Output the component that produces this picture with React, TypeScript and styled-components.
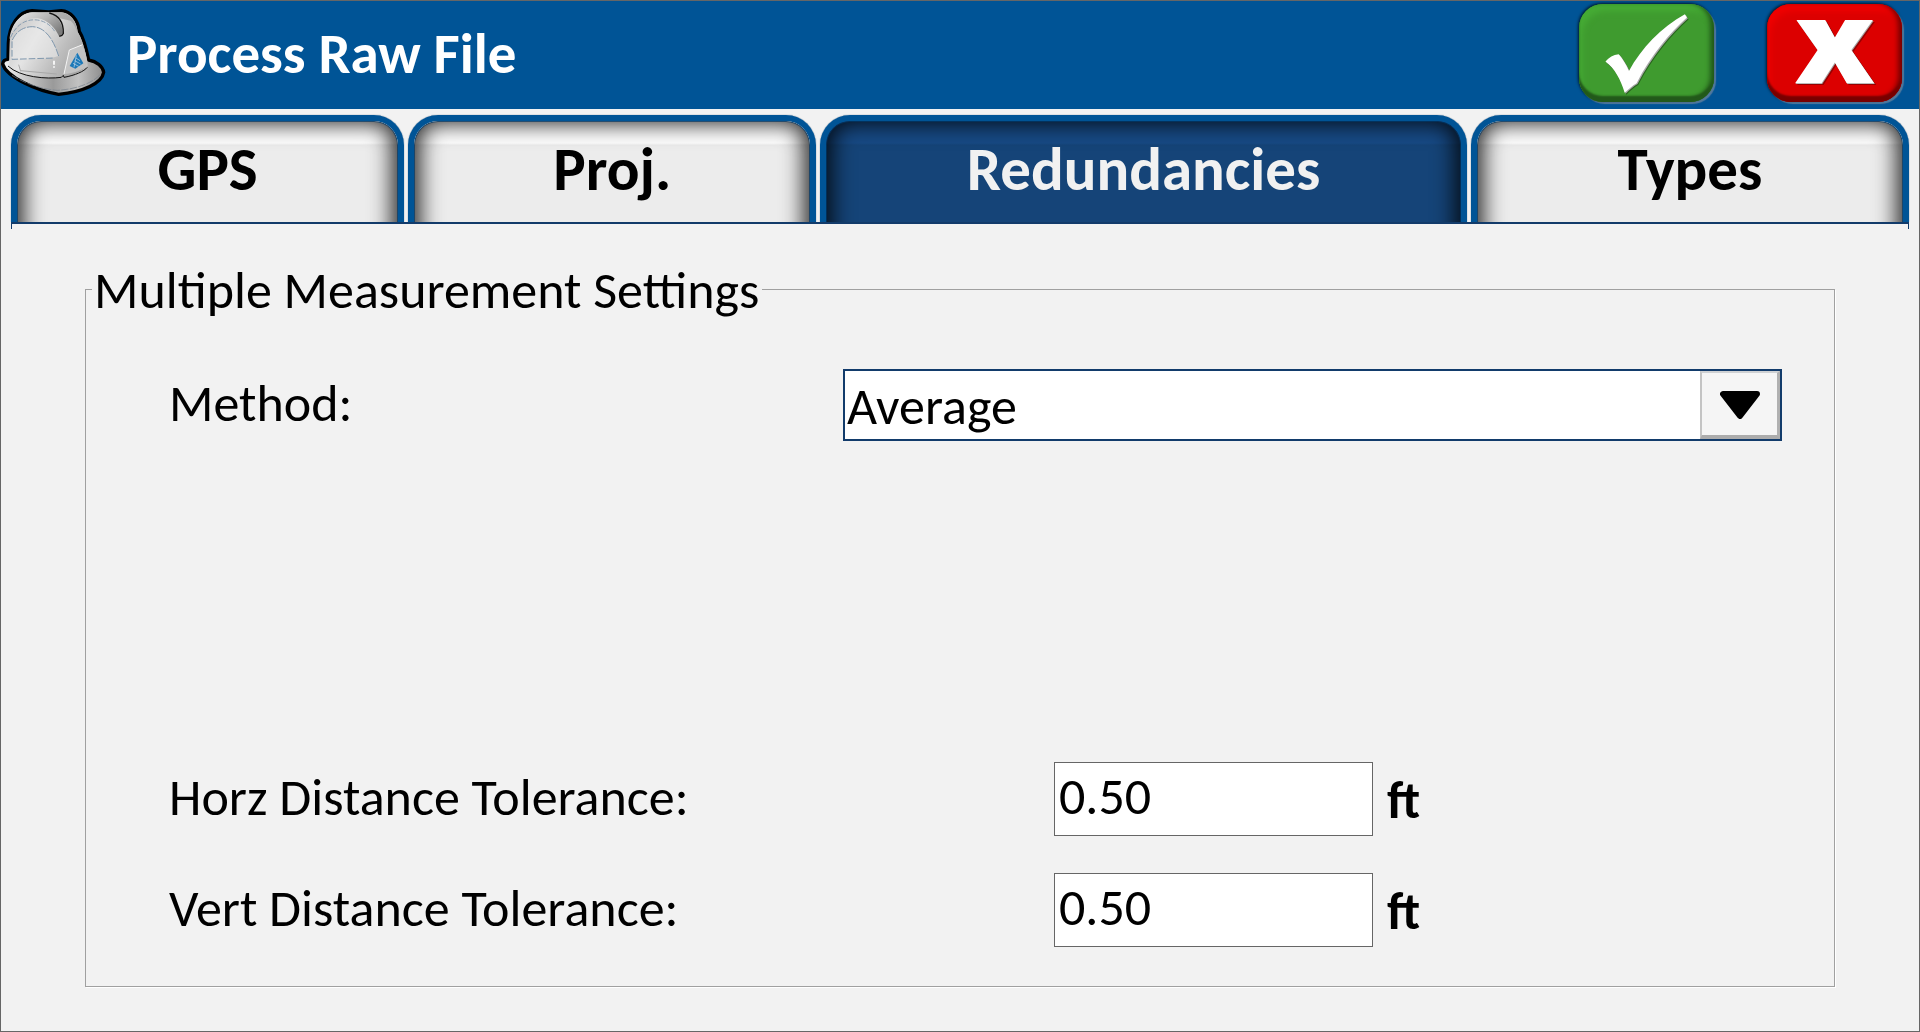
import React, { useState } from "react";
import styled, { createGlobalStyle } from "styled-components";

const color = {
  frame: "#666666",
  brand: "#005496",
  navy: "#123b6b",
  surface: "#f2f2f2",
  tab: "#ececec",
  tabActive: "#154478",
  etched: "#a0a0a0",
};

const GlobalStyle = createGlobalStyle`
  *, *::before, *::after { box-sizing: border-box; }
  body {
    margin: 0;
    background: ${color.surface};
    color: #000;
    font-family: Calibri, Carlito, "Open Sans", "Noto Sans", sans-serif;
  }
  button, input, select { font: inherit; color: inherit; }
`;

const Window = styled.div`
  display: flex;
  flex-direction: column;
  min-height: 100vh;
  border: 1px solid ${color.frame};
  background: ${color.surface};
`;

const TitleBar = styled.header`
  display: flex;
  align-items: flex-start;
  height: 108px;
  padding-right: 17px;
  background: ${color.brand};
  color: #fff;
`;

const Title = styled.h1`
  flex: 1;
  margin: 0;
  padding-left: 18px;
  font-size: 57px;
  line-height: 106px;
  font-weight: 700;
  white-space: nowrap;
`;

const Actions = styled.div`
  display: flex;
  gap: 53px;
  padding-top: 3px;
`;

const ActionButton = styled.button<{ $face: string; $light: string; $dark: string }>`
  width: 135px;
  height: 98px;
  padding: 0;
  border: 0;
  border-radius: 24px;
  background: ${(p) => p.$face};
  box-shadow:
    inset 0 -6px 2px ${(p) => p.$dark},
    inset -4px -2px 5px ${(p) => p.$dark},
    inset 3px 7px 6px ${(p) => p.$light},
    -1px -1px 3px rgba(0, 0, 0, 0.7),
    2px 2px 1px rgba(140, 150, 165, 0.6);
  cursor: pointer;
`;

const Glyph = styled.svg`
  display: block;
  width: 100%;
  height: 100%;
`;

const TabList = styled.div`
  display: flex;
  gap: 4px;
  margin: 6px 10px 0;
`;

const Tab = styled.button<{ $grow: number; $active: boolean }>`
  position: relative;
  flex: ${(p) => p.$grow} 1 0;
  min-width: 0;
  height: 107px;
  padding: 0;
  overflow: hidden;
  border: 6px solid ${color.brand};
  border-bottom: 0;
  border-radius: 30px 30px 0 0;
  background: ${(p) =>
    p.$active
      ? `linear-gradient(#174a85 22px, ${color.tabActive} 24px)`
      : `linear-gradient(#fff 22px, ${color.tab} 24px)`};
  box-shadow: 0 0 1px #24415c;
  color: ${(p) => (p.$active ? "#f1f1f1" : "#000")};
  font-size: 61px;
  line-height: 96px;
  font-weight: 700;
  cursor: pointer;

  &::before {
    content: "";
    position: absolute;
    inset: 0 0 -40px;
    border-radius: 24px;
    box-shadow:
      inset 0 0 0 1px rgba(0, 56, 104, 0.7),
      inset 0 -3px 22px 6px rgba(0, 0, 0, 0.85);
  }
`;

const TabText = styled.span`
  position: relative;
  display: block;
  height: 101px;
`;

const TabRule = styled.div`
  height: 7px;
  margin: 0 10px;
  border: solid ${color.navy};
  border-width: 2px 1px 0;
`;

const Panel = styled.main`
  display: flex;
  flex: 1;
  padding: 30px 84px 44px 84px;
`;

const Group = styled.fieldset`
  display: flex;
  flex: 1;
  flex-direction: column;
  min-width: 0;
  margin: 0;
  padding: 50px 52px 39px 83px;
  border: 1px solid ${color.etched};
  box-shadow: 1px 1px 0 #fff;
  font-size: 52px;
  line-height: 58px;
`;

const Legend = styled.legend`
  margin-left: -77px;
  padding: 2px 3px 0 2px;
`;

const FieldLabel = styled.label`
  padding-bottom: 4px;
`;

const MethodRow = styled.div`
  display: grid;
  grid-template-columns: minmax(0, 674fr) minmax(0, 939fr);
  align-items: center;
`;

const ToleranceList = styled.div`
  display: grid;
  gap: 37px;
  margin-top: auto;
`;

const ToleranceRow = styled.div`
  display: grid;
  grid-template-columns: minmax(0, 885fr) minmax(0, 319fr) minmax(0, 409fr);
  align-items: center;
`;

const SelectBox = styled.div`
  position: relative;
`;

const Select = styled.select`
  display: block;
  width: 100%;
  height: 72px;
  padding: 2px 84px 0 2px;
  appearance: none;
  border: 2px solid ${color.navy};
  border-radius: 0;
  outline: 0;
  background: #fff;
`;

const DropFace = styled.span`
  position: absolute;
  top: 2px;
  right: 2px;
  bottom: 2px;
  display: grid;
  place-items: center;
  width: 80px;
  padding-top: 2px;
  border: solid;
  border-width: 2px 3px 4px 2px;
  border-color: #cfd1d3 #b0b0b0 #acacac #c4c4c4;
  background: #f5f5f5;
  pointer-events: none;
`;

const NumberInput = styled.input`
  width: 100%;
  height: 74px;
  padding: 0 4px 6px;
  border: 1px solid ${color.frame};
  border-radius: 0;
  outline: 0;
  background: #fff;
`;

const Unit = styled.span`
  padding: 2px 0 0 14px;
  font-weight: 700;
`;

function HardHat() {
  return (
    <svg width="108" height="108" viewBox="3 3 324 324" aria-hidden="true">
      <defs>
        <linearGradient id="shell" x1="0" y1="0.2" x2="1" y2="0.7">
          <stop offset="0" stopColor="#c4c4c4" />
          <stop offset="0.35" stopColor="#e4e4e4" />
          <stop offset="0.7" stopColor="#bdbdbd" />
          <stop offset="1" stopColor="#a2a2a2" />
        </linearGradient>
        <linearGradient id="brim" x1="0" y1="0" x2="1" y2="0">
          <stop offset="0" stopColor="#f2f2f2" />
          <stop offset="0.5" stopColor="#9a9a9a" />
          <stop offset="0.75" stopColor="#c2c2c2" />
          <stop offset="1" stopColor="#8b8b8b" />
        </linearGradient>
        <linearGradient id="ridge" x1="0" y1="0" x2="1" y2="0.6">
          <stop offset="0" stopColor="#f4f4f4" />
          <stop offset="0.6" stopColor="#b5b5b5" />
          <stop offset="1" stopColor="#7c7c7c" />
        </linearGradient>
      </defs>
      <path
        d="M24 178 L25 130 C27 75 56 34 96 32 L146 36 L184 32 C212 34 234 58 238 94 C250 112 258 142 266 180 C290 184 309 200 311 217 C306 250 250 276 176 283 C110 272 20 232 8 192 C9 184 14 178 24 178 Z"
        fill="url(#brim)"
        stroke="#000"
        strokeWidth="10"
        strokeLinejoin="round"
      />
      <path
        d="M28 184 L29 130 C32 78 58 40 96 37 L184 37 C210 41 229 62 233 96 C247 120 255 146 261 184 C262 206 230 226 190 232 C130 236 60 230 28 198 Z"
        fill="url(#shell)"
      />
      <path d="M29 112 C36 70 62 39 98 38 L146 38 C172 46 188 70 189 98 L178 110 C166 84 144 60 112 54 C76 52 46 74 29 118 Z" fill="url(#ridge)" />
      <path d="M146 38 L184 37 C208 42 228 60 232 96 C230 88 222 70 212 62 L176 54 Z" fill="#8c8c8c" opacity="0.55" />
      <path d="M148 39 C176 46 191 68 190 100 C187 106 182 109 178 108" fill="none" stroke="#111" strokeWidth="4" />
      <path d="M36 178 L37 116 C50 92 72 80 98 80 C136 82 160 118 176 168 C150 178 90 178 36 178 Z" fill="#e9e9e9" opacity="0.6" />
      <path d="M37 120 C50 92 72 80 98 80 C136 82 160 118 176 168" fill="none" stroke="#7f97ad" strokeWidth="3" strokeDasharray="26 4" />
      <path d="M32 112 C48 74 78 56 112 60 C138 64 154 78 164 94" fill="none" stroke="#8b9fb2" strokeWidth="3" strokeDasharray="14 5" />
      <path d="M36 124 L36 178 L164 174" fill="none" stroke="#7f97ad" strokeWidth="3" strokeDasharray="20 6" />
      <path d="M24 198 C60 232 140 238 184 232 L190 226 L192 232 C226 226 252 214 262 202" fill="none" stroke="#111" strokeWidth="3" />
      <path d="M62 212 L170 222 M56 194 L62 214" fill="none" stroke="#a8a8a8" strokeWidth="3" />
      <path d="M36 226 C80 254 130 268 172 271 C230 268 280 248 302 222" fill="none" stroke="#76818d" strokeWidth="2" strokeDasharray="22 4" />
      <path d="M162 182 L162 194 M162 199 L162 203" stroke="#fff" strokeWidth="5" />
      <path d="M192 222 L208 150 L246 135 C256 150 262 176 263 198 C248 210 222 220 192 222 Z" fill="#c9c9c9" opacity="0.8" />
      <path d="M192 222 L208 150 L248 134" fill="none" stroke="#f4f4f4" strokeWidth="3" />
      <path d="M232 158 L250 190 L226 206 L209 198 Z" fill="#1b78b8" />
      <path d="M228 174 L240 182 M224 182 L242 192 M219 190 L236 199 M229 166 L222 202" stroke="#c9dbe8" strokeWidth="2" />
    </svg>
  );
}

function CheckGlyph() {
  const shape =
    "M197 185 C208 172 220 165 237 163 C248 175 258 192 268 213 C305 145 365 82 437 42 L443 52 C390 100 335 165 291 250 C278 258 266 268 255 279 C243 240 225 205 197 185 Z";
  return (
    <Glyph viewBox="118 11 406 296" aria-hidden="true">
      <path d={shape} transform="translate(5 6)" fill="#1f4d17" opacity="0.7" />
      <path d={shape} transform="translate(3 3)" fill="#a9a9a9" />
      <path d={shape} fill="#fff" />
    </Glyph>
  );
}

function CrossGlyph() {
  const shape = "770,59 857,59 886,112 917,59 1001,59 936,150 1005,250 922,250 886,188 846,250 766,250 834,150";
  return (
    <Glyph viewBox="682 11 406 296" aria-hidden="true">
      <polygon points={shape} transform="translate(6 6)" fill="#6a0000" opacity="0.6" />
      <polygon points={shape} transform="translate(2 3)" fill="#a5a5a5" />
      <polygon points={shape} fill="#fff" />
    </Glyph>
  );
}

const tabs = [
  { label: "GPS", grow: 381 },
  { label: "Proj.", grow: 396 },
  { label: "Redundancies", grow: 634 },
  { label: "Types", grow: 426 },
];

const tolerances = [
  { id: "horz", label: "Horz Distance Tolerance:" },
  { id: "vert", label: "Vert Distance Tolerance:" },
];

export default function App() {
  const [active, setActive] = useState("Redundancies");

  return (
    <Window>
      <GlobalStyle />
      <TitleBar>
        <HardHat />
        <Title>Process Raw File</Title>
        <Actions>
          <ActionButton type="button" aria-label="Accept" $face="#3f9b2f" $light="#46ac35" $dark="#22591a">
            <CheckGlyph />
          </ActionButton>
          <ActionButton type="button" aria-label="Cancel" $face="#dc0000" $light="#f00000" $dark="#780000">
            <CrossGlyph />
          </ActionButton>
        </Actions>
      </TitleBar>

      <TabList role="tablist">
        {tabs.map((tab) => (
          <Tab
            key={tab.label}
            type="button"
            role="tab"
            aria-selected={tab.label === active}
            $grow={tab.grow}
            $active={tab.label === active}
            onClick={() => setActive(tab.label)}
          >
            <TabText>{tab.label}</TabText>
          </Tab>
        ))}
      </TabList>
      <TabRule />

      <Panel>
        <Group>
          <Legend>Multiple Measurement Settings</Legend>
          <MethodRow>
            <FieldLabel htmlFor="method">Method:</FieldLabel>
            <SelectBox>
              <Select id="method" defaultValue="Average">
                <option>Average</option>
              </Select>
              <DropFace>
                <svg width="40" height="28" viewBox="0 0 40 28" aria-hidden="true">
                  <path d="M3 3 H37 L20 25 Z" stroke="#000" strokeWidth="6" strokeLinejoin="round" />
                </svg>
              </DropFace>
            </SelectBox>
          </MethodRow>
          <ToleranceList>
            {tolerances.map((row) => (
              <ToleranceRow key={row.id}>
                <FieldLabel htmlFor={row.id}>{row.label}</FieldLabel>
                <NumberInput id={row.id} type="text" inputMode="decimal" defaultValue="0.50" />
                <Unit>ft</Unit>
              </ToleranceRow>
            ))}
          </ToleranceList>
        </Group>
      </Panel>
    </Window>
  );
}
